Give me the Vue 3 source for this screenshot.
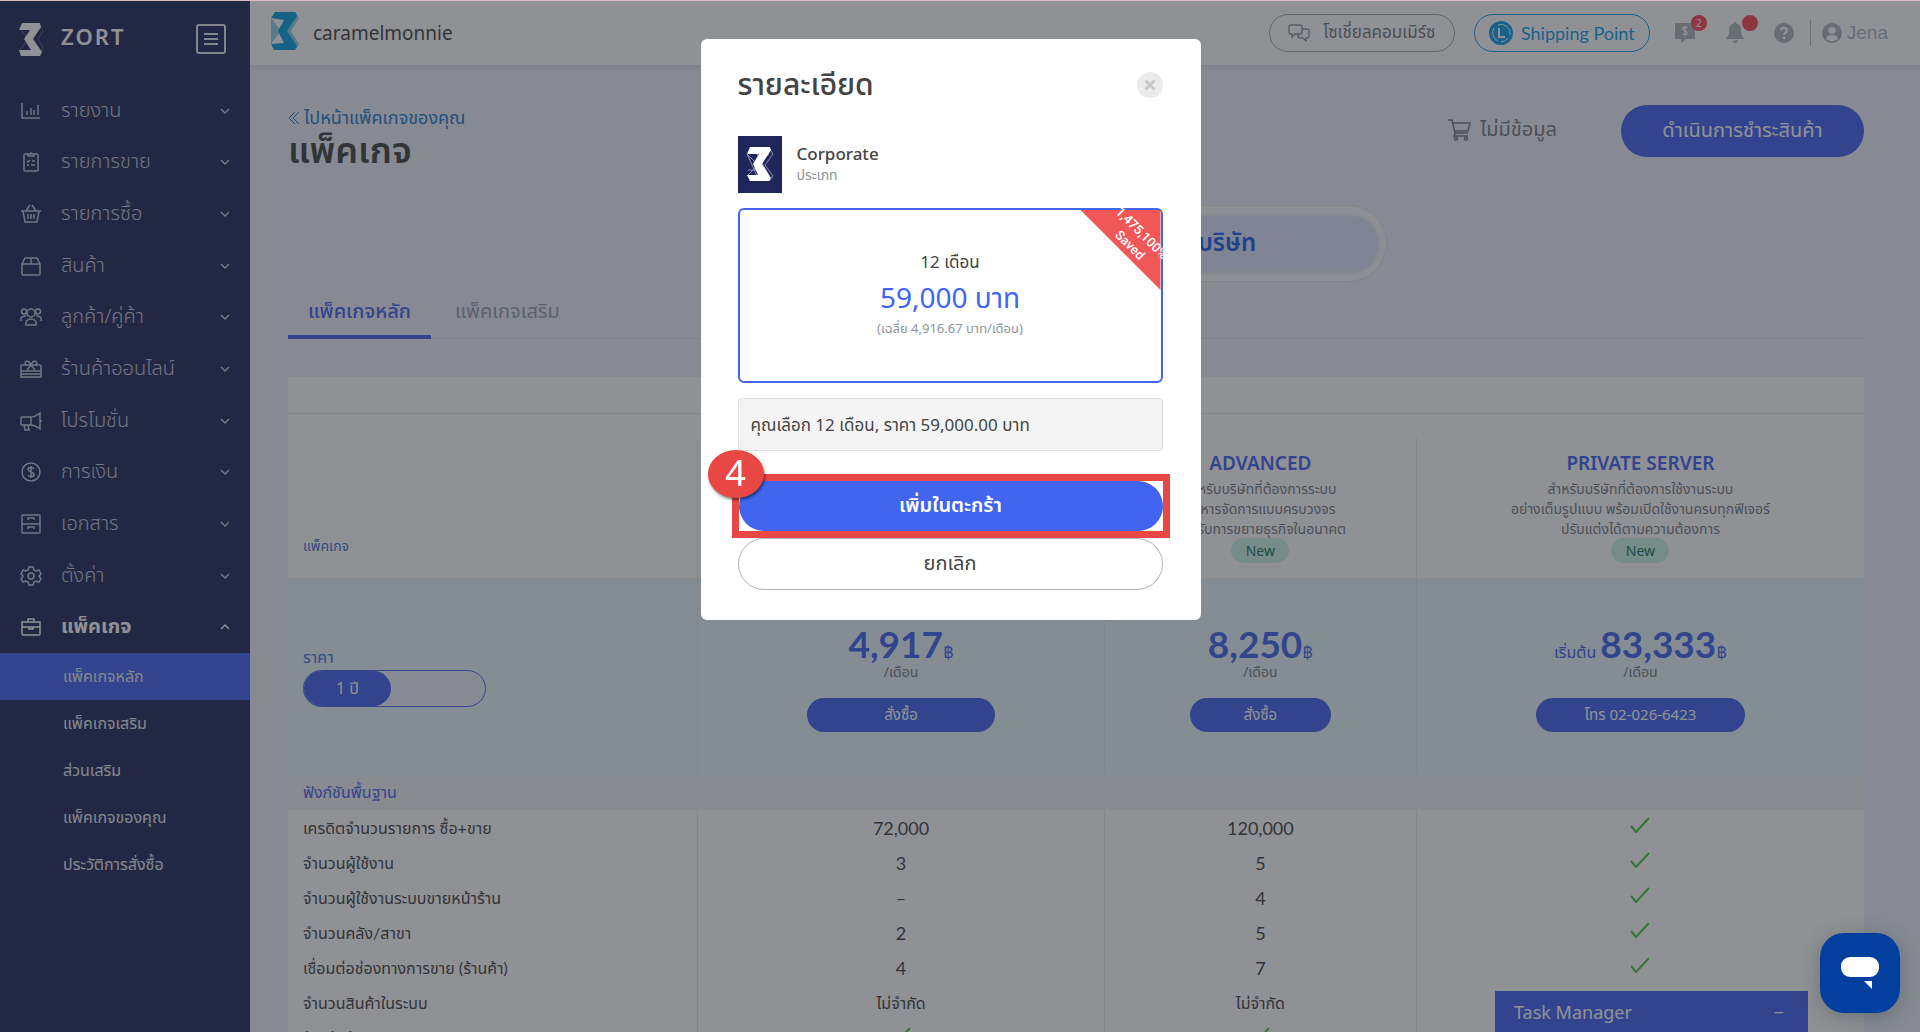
<template>
  <div class="app">
    <aside class="sidebar">
      <div class="brand">
        <svg class="brand-logo" viewBox="0 0 26 34" aria-hidden="true">
          <path d="M20 1l5 8-5 8 5 8-4 8M2 6l8 11-8 11M12 17l8-12" fill="none" stroke="#5f668e" stroke-width="1" />
          <path d="M4 1h18l1 4-8 12 9 13-2 4H3l-2-6h12L6 17l6-9H1z" fill="#fff" />
        </svg>
        <span class="brand-name">ZORT</span>
        <button class="burger" type="button" aria-label="เมนู">
          <svg viewBox="0 0 30 30"><rect x="1" y="1" width="28" height="28" rx="2" /><path d="M8 10h14M8 15h14M8 20h14" /></svg>
        </button>
      </div>
      <nav>
        <div class="items">
          <a v-for="m in menu" :key="m.label" href="#" class="item" :class="{ open: m.open }">
            <svg class="item-icon" viewBox="0 0 22 22" aria-hidden="true"><path :d="m.icon" /></svg>
            <span>{{ m.label }}</span>
            <svg class="caret" viewBox="0 0 10 10" aria-hidden="true"><path :d="m.open ? 'M1 7l4-4 4 4' : 'M1 3l4 4 4-4'" /></svg>
          </a>
        </div>
        <a v-for="(s, i) in submenu" :key="s" href="#" class="sub" :class="{ active: i === 0 }">{{ s }}</a>
      </nav>
    </aside>

    <div class="page">
      <header class="topbar">
        <svg class="shop-logo" viewBox="0 0 30 40" aria-hidden="true">
          <path d="M22 1h4l3 6-8 13 8 13-3 5h-8L8 20z" fill="#8bd2ec" />
          <path d="M1 7l10 13L1 33z" fill="#8bd2ec" />
          <path d="M5 1h20l2 4-10 15 10 15-2 4H4l-3-6 13-1-6-12 6-11-13-2z" fill="#0ba0e2" />
        </svg>
        <span class="shop">caramelmonnie</span>
        <button class="pill" type="button">
          <svg width="22" height="18" viewBox="0 0 22 18" fill="none" stroke="#8d949b" stroke-width="1.4"><path d="M3 1h9a2 2 0 0 1 2 2v5a2 2 0 0 1-2 2H7l-3 3v-3H3a2 2 0 0 1-2-2V3a2 2 0 0 1 2-2zM14 5h5a2 2 0 0 1 2 2v5a2 2 0 0 1-2 2h-1v3l-3-3h-3a2 2 0 0 1-2-2v-2" /></svg>
          โซเชี่ยลคอมเมิร์ซ
        </button>
        <button class="pill ship" type="button">
          <svg width="24" height="24" viewBox="0 0 24 24" fill="none"><circle cx="12" cy="12" r="12" fill="#109fe8" /><path d="M5 7a9 9 0 0 0 4 13M9 4a9 9 0 0 1 12 10M12 21a9 9 0 0 0 7-4" stroke="#fff" stroke-width="1" /><path d="M10 7v9h6" stroke="#fff" stroke-width="2" /></svg>
          Shipping Point
        </button>
        <div class="tools">
          <button type="button" class="tool" aria-label="เครดิต">
            <svg width="22" height="22" viewBox="0 0 22 22"><path d="M2 1h18a1 1 0 0 1 1 1v14a1 1 0 0 1-1 1h-8l-5 4v-4H2a1 1 0 0 1-1-1V2a1 1 0 0 1 1-1z" fill="#aeb6bd" /><path d="M13.500 6c-1-1-5-1-5 1s5 2 5 4-4 2-5 1M11 3.500v11" stroke="#fff" stroke-width="1.300" fill="none" /></svg>
            <span class="badge">2</span>
          </button>
          <button type="button" class="tool" aria-label="แจ้งเตือน">
            <svg width="20" height="22" viewBox="0 0 20 22"><path d="M10 0a1.500 1.500 0 0 1 1.500 1.600C14.500 2.300 16 5 16 8c0 5 1 6.500 3 8v1H1v-1c2-1.500 3-3 3-8 0-3 1.500-5.700 4.500-6.400A1.500 1.500 0 0 1 10 0zM7.500 18.500h5a2.500 2.500 0 0 1-5 0z" fill="#aeb6bd" /></svg>
            <span class="badge"></span>
          </button>
          <button type="button" class="tool" aria-label="ช่วยเหลือ">
            <svg width="20" height="20" viewBox="0 0 20 20"><circle cx="10" cy="10" r="10" fill="#aeb6bd" /><path d="M7 7.500C7 4 13 4 13 7.500c0 2-3 2.200-3 4.500" stroke="#fff" stroke-width="2.200" fill="none" /><circle cx="10" cy="15" r="1.400" fill="#fff" /></svg>
          </button>
        </div>
        <a href="#" class="user">
          <svg width="20" height="20" viewBox="0 0 20 20"><circle cx="10" cy="10" r="10" fill="#aeb6bd" /><circle cx="10" cy="7.500" r="3.600" fill="#fff" /><path d="M4 15.500c1-3 3-3.500 6-3.500s5 .5 6 3.500c-3 3.500-9 3.500-12 0z" fill="#fff" /></svg>
          Jena
        </a>
      </header>

      <main>
        <div class="head">
          <div>
            <a href="#" class="back">
              <svg width="12" height="14" viewBox="0 0 12 14" fill="none" stroke="currentColor" stroke-width="1"><path d="M7 1L1 7l6 6M11 1L5 7l6 6" /></svg>
              ไปหน้าแพ็คเกจของคุณ
            </a>
            <h1>แพ็คเกจ</h1>
          </div>
          <div class="cart">
            <svg width="24" height="22" viewBox="0 0 24 22" fill="none" stroke="currentColor" stroke-width="1.500"><path d="M1 1h4l3 13h13M6 4h17l-2 8H8M8 14l-1 3h14" /><circle cx="9" cy="19.500" r="1.500" /><circle cx="19" cy="19.500" r="1.500" /></svg>
            ไม่มีข้อมูล
          </div>
          <button class="pay" type="button">ดำเนินการชำระสินค้า</button>
        </div>

        <div class="switch">
          <button type="button">บุคคล</button>
          <button type="button" class="on">บริษัท</button>
        </div>

        <div class="tabs">
          <a href="#" class="tab on">แพ็คเกจหลัก</a>
          <a href="#" class="tab">แพ็คเกจเสริม</a>
        </div>

        <table>
          <colgroup><col class="c1" /><col class="c2" /><col class="c3" /><col class="c4" /></colgroup>
          <thead>
            <tr class="blank"><td colspan="4"></td></tr>
            <tr class="gap"><td colspan="4"></td></tr>
            <tr class="plans">
              <th class="first">แพ็คเกจ</th>
              <th v-for="p in plans" :key="p.name">
                <div class="plan-name">{{ p.name }}</div>
                <div v-for="d in p.desc" :key="d" class="desc">{{ d }}</div>
                <span class="new">New</span>
              </th>
            </tr>
          </thead>
          <tbody>
            <tr class="prices">
              <td class="first">
                <div class="price-label">ราคา</div>
                <div class="term"><button type="button">1 ปี</button></div>
              </td>
              <td v-for="p in plans" :key="p.name">
                <div class="price"><small v-if="p.prefix">{{ p.prefix }}&nbsp;</small>{{ p.price }}<small>฿</small></div>
                <div class="per">/เดือน</div>
                <button type="button" class="order" :class="p.size">{{ p.action }}</button>
              </td>
            </tr>
            <tr class="section"><td colspan="4">ฟังก์ชันพื้นฐาน</td></tr>
            <tr v-for="r in rows" :key="r[0]" class="row">
              <td class="first">{{ r[0] }}</td>
              <td v-for="(v, i) in r.slice(1)" :key="i">
                <svg v-if="v === true" class="check" viewBox="0 0 20 16"><path d="M1 9l5 6L19 1" /></svg>
                <span v-else :class="{ thai: v.length > 7 }">{{ v }}</span>
              </td>
            </tr>
          </tbody>
        </table>
      </main>
    </div>

    <button class="tasks" type="button"><span>Task Manager</span><span>−</span></button>

    <div class="overlay">
      <section class="modal" role="dialog" aria-labelledby="dialog-title">
        <div class="modal-head">
          <h2 id="dialog-title">รายละเอียด</h2>
          <button class="close" type="button" aria-label="ปิด">
            <svg width="12" height="12" viewBox="0 0 12 12"><path d="M1.500 1.500l9 9M10.500 1.500l-9 9" stroke="#c9c9c9" stroke-width="3" /></svg>
          </button>
        </div>
        <div class="product">
          <svg class="thumb" viewBox="0 0 44 57" aria-hidden="true">
            <rect width="44" height="57" fill="#1f2659" />
            <path d="M31 12l4 6-8 11 8 11-4 5M9 18l22 22M9 40l22-22M9 18l10 22h12M19 18l12 22M10 34h14" fill="none" stroke="#8a90b5" stroke-width="1" />
            <path d="M12 11h20l1 3-9 14 9 14-2 3H12l-3-6h11l-5-11 6-10H9z" fill="#fff" />
          </svg>
          <div>
            <div class="product-name">Corporate</div>
            <div class="product-kind">ประเภท</div>
          </div>
        </div>
        <div class="offer">
          <div class="ribbon"></div>
          <div class="saved">1,475,100%<br />Saved</div>
          <div class="months">12 เดือน</div>
          <div class="total">59,000 บาท</div>
          <div class="avg">(เฉลี่ย 4,916.67 บาท/เดือน)</div>
        </div>
        <div class="summary">คุณเลือก 12 เดือน, ราคา 59,000.00 บาท</div>
        <div class="step">
          <span class="step-no">4</span>
          <button class="add" type="button">เพิ่มในตะกร้า</button>
        </div>
        <button class="cancel" type="button">ยกเลิก</button>
      </section>
    </div>

    <button class="chat" type="button" aria-label="แชท">
      <svg width="40" height="34" viewBox="0 0 40 34"><rect x="1" y="1" width="38" height="20" rx="9" fill="#fff" /><path d="M24 25h8v8z" fill="#fff" /></svg>
    </button>
  </div>
</template>

<script setup>
const menu = [
  { label: 'รายงาน', icon: 'M2 3v15h18M7 15v-4M11 15V8M14 15v-5M18 15V5' },
  { label: 'รายการขาย', icon: 'M8 3H5a1 1 0 0 0-1 1v15a1 1 0 0 0 1 1h12a1 1 0 0 0 1-1V4a1 1 0 0 0-1-1h-3M8 5V3h2a1 1 0 0 1 2 0h2v2zM7 10l1 1 2-2M12 10h3M7 14h2M11 14h4' },
  { label: 'รายการซื้อ', icon: 'M1 8h20M3 8l2 11h12l2-11M6 8l4-6M16 8l-4-6M8 11v5M11 11v5M14 11v5' },
  { label: 'สินค้า', icon: 'M2 9l3-6h12l3 6v10a1 1 0 0 1-1 1H3a1 1 0 0 1-1-1zM2 9h18M11 3v6' },
  { label: 'ลูกค้า/คู่ค้า', icon: 'M11 3a4 4 0 1 1 0 8 4 4 0 0 1 0-8zM4 3a2 2 0 1 1 0 5 2 2 0 0 1 0-5zM18 3a2 2 0 1 1 0 5 2 2 0 0 1 0-5zM6 19c-2-8 12-8 10 0zM1 15c-1-4 2-5 5-5M21 15c1-4-2-5-5-5' },
  { label: 'ร้านค้าออนไลน์', icon: 'M2 7h18a1 1 0 0 1 1 1v11H1V8a1 1 0 0 1 1-1zM1 13h20M1 16h20M11 7c-2-6-8-4-5 0M11 7c2-6 8-4 5 0M11 7l-4 5M11 7l4 5' },
  { label: 'โปรโมชั่น', icon: 'M2 7h9v8H2a1 1 0 0 1-1-1V8a1 1 0 0 1 1-1zM11 7c4 0 6-2 9-4v16c-3-2-5-4-9-4M21 10v2M4 15l1 5h4l-1-5' },
  { label: 'การเงิน', icon: 'M11 2a9 9 0 1 1 0 18 9 9 0 0 1 0-18zM14 8c-1-2-6-2-6 .5s6 2 6 5-5 2.500-6 .5M11 5v12' },
  { label: 'เอกสาร', icon: 'M3 2h16a1 1 0 0 1 1 1v16a1 1 0 0 1-1 1H3a1 1 0 0 1-1-1V3a1 1 0 0 1 1-1zM2 11h18M8 7V5h6v2M8 16v-2h6v2' },
  { label: 'ตั้งค่า', icon: 'M9 2h4l1 3 2 1 3-1 2 4-2 2 2 3-2 3-3-1-2 1-1 3H9l-1-3-2-1-3 1-2-3 2-3-2-2 2-4 3 1 2-1zM11 8a3 3 0 1 1 0 6 3 3 0 0 1 0-6z' },
  { label: 'แพ็คเกจ', open: true, icon: 'M2 6h18v12a1 1 0 0 1-1 1H3a1 1 0 0 1-1-1zM8 6V3h6v3M2 11h18M9 11v2h4v-2' }
]
const submenu = ['แพ็คเกจหลัก', 'แพ็คเกจเสริม', 'ส่วนเสริม', 'แพ็คเกจของคุณ', 'ประวัติการสั่งซื้อ']

const plans = [
  { name: 'CORPORATE', desc: ['สำหรับบริษัทที่ต้องการระบบ', 'บริหารจัดการธุรกิจ', 'แบบมืออาชีพ'], price: '4,917', action: 'สั่งซื้อ', size: 'mid' },
  { name: 'ADVANCED', desc: ['สำหรับบริษัทที่ต้องการระบบ', 'บริหารจัดการแบบครบวงจร', 'รองรับการขยายธุรกิจในอนาคต'], price: '8,250', action: 'สั่งซื้อ', size: 'small' },
  { name: 'PRIVATE SERVER', desc: ['สำหรับบริษัทที่ต้องการใช้งานระบบ', 'อย่างเต็มรูปแบบ พร้อมเปิดใช้งานครบทุกฟีเจอร์', 'ปรับแต่งได้ตามความต้องการ'], prefix: 'เริ่มต้น', price: '83,333', action: 'โทร 02-026-6423', size: 'large' }
]

const rows = [
  ['เครดิตจำนวนรายการ ซื้อ+ขาย', '72,000', '120,000', true],
  ['จำนวนผู้ใช้งาน', '3', '5', true],
  ['จำนวนผู้ใช้งานระบบขายหน้าร้าน', '–', '4', true],
  ['จำนวนคลัง/สาขา', '2', '5', true],
  ['เชื่อมต่อช่องทางการขาย (ร้านค้า)', '4', '7', true],
  ['จำนวนสินค้าในระบบ', 'ไม่จำกัด', 'ไม่จำกัด', true],
  ['ร้านค้าสำหรับตัวแทน', true, true, true]
]
</script>

<style>
body {
  margin: 0;
  overflow: hidden;
}
</style>

<style scoped>
* {
  box-sizing: border-box;
}
.app {
  position: relative;
  display: flex;
  height: 100vh;
  overflow: hidden;
  background: #edf0fa;
  color: #444;
  font-family: "Noto Sans", "Noto Sans Thai", "Noto Sans Thai UI", sans-serif;
  font-size: 16px;
}
button {
  border: 0;
  padding: 0;
  font: inherit;
  color: inherit;
  background: none;
}
a {
  text-decoration: none;
}
h1,
h2 {
  margin: 0;
  font-weight: 500;
}
.sidebar {
  width: 250px;
  flex: none;
  background: #232c5d;
  color: #b9c0cc;
}
.brand {
  display: flex;
  align-items: center;
  height: 78px;
  padding: 0 24px 0 18px;
}
.brand-logo {
  width: 26px;
  height: 34px;
}
.brand-name {
  margin-left: 17px;
  padding-bottom: 6px;
  flex: 1;
  color: #fff;
  font-size: 22px;
  font-weight: 600;
  letter-spacing: 2px;
}
.burger svg {
  display: block;
  width: 30px;
  height: 30px;
  fill: none;
  stroke: #e4e7ee;
  stroke-width: 2;
}
nav {
  padding-top: 7px;
}
.items {
  display: flex;
  flex-direction: column;
  height: 568px;
}
.item {
  display: flex;
  flex: 1;
  align-items: center;
  padding: 0 20px;
  color: #c3c9d4;
  font-size: 20px;
  font-weight: 300;
}
.item span {
  margin-left: 19px;
  flex: 1;
}
.item.open {
  color: #fff;
  font-weight: 700;
}
.item-icon {
  width: 22px;
  height: 22px;
  fill: none;
  stroke: currentColor;
  stroke-width: 1.500;
}
.caret {
  width: 10px;
  height: 10px;
  fill: none;
  stroke: currentColor;
  stroke-width: 1.500;
}
.sub {
  display: flex;
  align-items: center;
  height: 47px;
  padding-left: 63px;
  color: #e6e9ef;
  font-size: 16px;
}
.sub.active {
  background: #4165ee;
}
.page {
  flex: 1;
  min-width: 0;
}
.topbar {
  display: flex;
  align-items: center;
  height: 65px;
  padding: 0 32px 0 20px;
  background: #fff;
  box-shadow: 0 2px 6px rgba(60, 70, 110, 0.12);
}
.shop-logo {
  width: 30px;
  height: 40px;
  margin-bottom: 4px;
}
.shop {
  margin-left: 13px;
  flex: 1;
  font-size: 19px;
}
.pill {
  display: flex;
  align-items: center;
  justify-content: center;
  gap: 13px;
  width: 186px;
  height: 38px;
  border: 1px solid #a3a9af;
  border-radius: 19px;
  color: #777;
  font-size: 17px;
}
.pill.ship {
  gap: 8px;
  width: 176px;
  margin-left: 19px;
  border-color: #109fe8;
  color: #109fe8;
  font-family: Lato, sans-serif;
  font-size: 18px;
}
.tools {
  display: flex;
  align-items: center;
  gap: 29px;
  height: 26px;
  margin-left: 24px;
  padding-right: 16px;
  border-right: 1px solid #b6bbc0;
}
.tool {
  position: relative;
  display: flex;
}
.badge {
  position: absolute;
  left: 17px;
  top: -7px;
  width: 16px;
  height: 16px;
  border-radius: 50%;
  background: #fa4a55;
  color: #fff;
  font-size: 10px;
  line-height: 16px;
}
.user {
  display: flex;
  align-items: center;
  gap: 5px;
  margin-left: 11px;
  color: #aeb6bd;
  font-family: "Liberation Sans", sans-serif;
  font-size: 19px;
}
main {
  padding: 40px 56px 0 38px;
}
.head {
  display: flex;
  height: 100px;
}
.head > div:first-child {
  flex: 1;
}
.back {
  display: flex;
  align-items: center;
  gap: 4px;
  height: 26px;
  color: #1c7cc8;
  font-size: 18px;
}
h1 {
  font-size: 36px;
  line-height: 38px;
  font-weight: 600;
}
.cart {
  display: flex;
  align-items: center;
  gap: 9px;
  height: 50px;
  margin-right: 64px;
  color: #777b80;
  font-size: 20px;
}
.pay {
  width: 243px;
  height: 52px;
  border-radius: 26px;
  background: #4165ee;
  color: #fff;
  font-size: 20px;
}
.switch {
  display: flex;
  width: 622px;
  height: 77px;
  margin: 0 auto;
  padding: 10px 8px;
  border: 1px solid #e4e2e2;
  border-radius: 39px;
  background: #fafafc;
}
.switch button {
  flex: 1;
  border-radius: 28px;
  color: #555;
  font-size: 24px;
}
.switch .on {
  background: #dae4fc;
  color: #2161e8;
  font-weight: 600;
  box-shadow: 0 1px 4px rgba(60, 70, 110, 0.2);
}
.tabs {
  display: flex;
  height: 57px;
  border-bottom: 1px solid #dfe1e6;
}
.tab {
  padding: 15px 0 0 24px;
  color: #9aa0ac;
  font-size: 20px;
}
.tab.on {
  width: 143px;
  margin-bottom: -1px;
  padding: 15px 0 0;
  border-bottom: 4px solid #4165ee;
  color: #4165ee;
  text-align: center;
  font-weight: 500;
}
table {
  width: 100%;
  margin-top: 38px;
  border-collapse: collapse;
  table-layout: fixed;
  background: #fff;
  text-align: center;
}
.c1 {
  width: 26%;
}
.c2 {
  width: 25.800%;
}
.c3 {
  width: 19.800%;
}
td,
th {
  padding: 0;
  font-weight: 400;
}
.blank td {
  height: 36px;
  border-bottom: 1px solid #e8e8ea;
}
.gap td {
  height: 25px;
}
.plans th {
  height: 140px;
  padding-top: 10px;
  vertical-align: top;
}
.plans th + th,
.prices td + td,
.row td + td {
  border-left: 1px solid #e6e8ec;
}
.plans .first {
  padding-top: 98px;
  color: #3c79d8;
  font-size: 14px;
}
.first {
  padding-left: 15px;
  text-align: left;
}
.plan-name {
  color: #4165ee;
  font-size: 19px;
  line-height: 31px;
  font-weight: 600;
}
.desc {
  color: #757b82;
  font-size: 14px;
  line-height: 20px;
  white-space: nowrap;
}
.new {
  display: inline-block;
  width: 58px;
  height: 25px;
  margin-top: -2px;
  border-radius: 13px;
  background: #c9f5e5;
  color: #22735a;
  font-size: 14px;
  line-height: 25px;
}
.prices {
  background: #e7f5fc;
}
.prices td {
  height: 197px;
  padding-top: 44px;
  vertical-align: top;
}
.prices .first {
  padding-top: 66px;
}
.price-label {
  color: #3c79d8;
  font-size: 16px;
  line-height: 26px;
}
.term {
  width: 183px;
  height: 37px;
  border: 1px solid #4165ee;
  border-radius: 19px;
  background: #edf0fa;
}
.term button {
  width: 87px;
  height: 35px;
  border-radius: 18px;
  background: #4165ee;
  color: #fff;
  font-size: 16px;
}
.price {
  height: 44px;
  color: #4165ee;
  font-family: Lato, "Noto Sans Thai", sans-serif;
  font-size: 37px;
  line-height: 44px;
  font-weight: 700;
  white-space: nowrap;
}
.price small {
  font-size: 16px;
  font-weight: 400;
}
.per {
  color: #757b82;
  font-size: 14px;
  line-height: 12px;
}
.order {
  width: 188px;
  height: 34px;
  margin-top: 20px;
  border-radius: 17px;
  background: #4165ee;
  color: #fff;
  font-size: 15px;
}
.order.small {
  width: 141px;
}
.order.large {
  width: 209px;
}
.section td {
  height: 35px;
  padding-left: 15px;
  background: #f1f3f5;
  color: #4165ee;
  text-align: left;
  font-size: 16px;
}
.row td {
  height: 35px;
  font-family: Lato, "Noto Sans Thai", sans-serif;
  font-size: 18px;
  line-height: 24px;
}
.row .first,
.row .thai {
  font-size: 16px;
}
.check {
  display: block;
  width: 20px;
  height: 16px;
  margin: 0 auto 6px;
  fill: none;
  stroke: #46c83c;
  stroke-width: 2;
}
.tasks {
  position: absolute;
  right: 112px;
  bottom: 0;
  display: flex;
  align-items: center;
  justify-content: space-between;
  width: 313px;
  height: 41px;
  padding: 0 24px 0 19px;
  background: #4165ee;
  color: #fff;
  font-size: 18px;
}
.overlay {
  position: absolute;
  inset: 0;
  display: flex;
  justify-content: center;
  align-items: flex-start;
  padding: 38px 19px 0 0;
  border-top: 1px solid #d9bcc2;
  background: rgba(33, 36, 43, 0.5);
}
.modal {
  width: 500px;
  padding: 22px 38px 30px 37px;
  border-radius: 6px;
  background: #fff;
}
.modal-head {
  display: flex;
  justify-content: space-between;
  align-items: flex-end;
}
h2 {
  font-size: 30px;
  line-height: 46px;
}
.close {
  display: flex;
  align-items: center;
  justify-content: center;
  width: 26px;
  height: 26px;
  margin-bottom: 9px;
  border-radius: 50%;
  background: #ebebeb;
}
.product {
  display: flex;
  gap: 15px;
  margin: 29px 0 15px;
}
.thumb {
  width: 44px;
  height: 57px;
}
.product-name {
  margin-top: 7px;
  font-size: 17px;
  line-height: 22px;
  font-weight: 500;
}
.product-kind,
.avg {
  color: #8d949c;
  font-size: 14px;
  line-height: 20px;
}
.avg {
  font-size: 13px;
}
.offer {
  position: relative;
  height: 175px;
  padding-top: 38px;
  border: 2px solid #4165ee;
  border-radius: 6px;
  text-align: center;
}
.ribbon {
  position: absolute;
  top: 0;
  right: 0;
  width: 80px;
  height: 80px;
  background: #f25757;
  clip-path: polygon(0 0, 100% 0, 100% 100%);
}
.saved {
  position: absolute;
  top: 12px;
  right: -15px;
  width: 80px;
  color: #fff;
  font-family: Roboto, sans-serif;
  font-size: 13px;
  line-height: 17px;
  font-weight: 500;
  transform: rotate(45deg);
}
.months {
  font-size: 17px;
  line-height: 28px;
}
.total {
  color: #4165ee;
  font-size: 28px;
  line-height: 42px;
}
.summary {
  height: 53px;
  margin-top: 15px;
  padding-left: 12px;
  border: 1px solid #e0e0e0;
  border-radius: 4px;
  background: #f4f4f4;
  font-size: 17px;
  line-height: 51px;
}
.step {
  position: relative;
  margin: 23px -7px 0 -6px;
  border: 7px solid #e94743;
}
.step-no {
  position: absolute;
  left: -31px;
  top: -31px;
  width: 56px;
  height: 48px;
  border-radius: 50%;
  background: #e94743;
  color: #fff;
  font-size: 36px;
  line-height: 46px;
  text-align: center;
  box-shadow: 1px 2px 3px rgba(0, 0, 0, 0.5);
}
.add {
  display: block;
  width: 100%;
  height: 50px;
  border-radius: 25px;
  background: #4165ee;
  color: #fff;
  font-size: 20px;
  font-weight: 600;
}
.cancel {
  display: block;
  width: 100%;
  height: 52px;
  border: 1px solid #adb5bd;
  border-radius: 26px;
  font-size: 20px;
}
.chat {
  position: absolute;
  right: 20px;
  bottom: 19px;
  display: flex;
  align-items: center;
  justify-content: center;
  width: 80px;
  height: 80px;
  border-radius: 24px;
  background: #033f9f;
  box-shadow: 0 4px 20px rgba(20, 50, 50, 0.3);
}
</style>
